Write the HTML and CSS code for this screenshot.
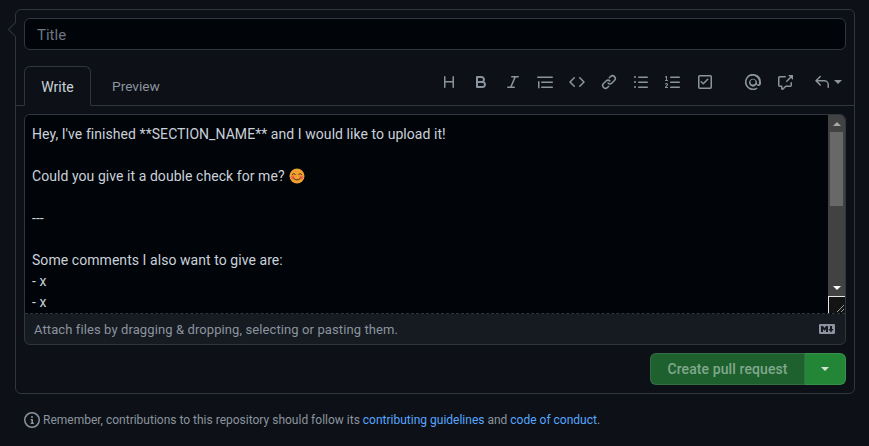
FILE: index.html
```html
<!DOCTYPE html>
<html>
<head>
    <title>Create pull request</title>
    <meta charset="utf-8">
    <link rel="stylesheet" href="styles.css">
</head>
<body>
    <div class="discussion-box">
        <div class="title-input">Title</div>

        <div class="tab-header">
            <div class="tab active">Write</div>
            <div class="tab">Preview</div>
            <div class="toolbar">
                <div class="tool-group">
                    <svg class="icon" viewBox="0 0 16 16"><path d="M3.75 2a.75.75 0 0 1 .75.75V7h7V2.75a.75.75 0 0 1 1.5 0v10.5a.75.75 0 0 1-1.5 0V8.5h-7v4.75a.75.75 0 0 1-1.5 0V2.75A.75.75 0 0 1 3.75 2Z"/></svg>
                    <svg class="icon" viewBox="0 0 16 16"><path d="M4 2h4.5a3.501 3.501 0 0 1 2.852 5.53A3.499 3.499 0 0 1 9.5 14H4a1 1 0 0 1-1-1V3a1 1 0 0 1 1-1Zm1 7v3h4.5a1.5 1.5 0 0 0 0-3Zm3.5-2a1.5 1.5 0 0 0 0-3H5v3Z"/></svg>
                    <svg class="icon" viewBox="0 0 16 16"><path d="M6 2.75A.75.75 0 0 1 6.75 2h6.5a.75.75 0 0 1 0 1.5h-2.505l-3.858 9H9.25a.75.75 0 0 1 0 1.5h-6.5a.75.75 0 0 1 0-1.5h2.505l3.858-9H6.75A.75.75 0 0 1 6 2.75Z"/></svg>
                    <svg class="icon" viewBox="0 0 16 16"><path d="M.75 2.5h14.5a.75.75 0 0 1 0 1.5H.75a.75.75 0 0 1 0-1.5Zm4 5h10.5a.75.75 0 0 1 0 1.5H4.75a.75.75 0 0 1 0-1.5Zm0 5h10.5a.75.75 0 0 1 0 1.5H4.75a.75.75 0 0 1 0-1.5ZM2.5 7.75v6a.75.75 0 0 1-1.5 0v-6a.75.75 0 0 1 1.5 0Z"/></svg>
                    <svg class="icon" viewBox="0 0 16 16"><path d="m11.28 3.22 4.25 4.25a.75.75 0 0 1 0 1.06l-4.25 4.25a.749.749 0 0 1-1.275-.326.749.749 0 0 1 .215-.734L13.94 8l-3.72-3.72a.749.749 0 0 1 .326-1.275.749.749 0 0 1 .734.215Zm-6.56 0a.751.751 0 0 1 1.042.018.751.751 0 0 1 .018 1.042L2.06 8l3.72 3.72a.749.749 0 0 1-.326 1.275.749.749 0 0 1-.734-.215L.47 8.53a.75.75 0 0 1 0-1.06Z"/></svg>
                    <svg class="icon" viewBox="0 0 16 16"><path d="m7.775 3.275 1.25-1.25a3.5 3.5 0 1 1 4.95 4.95l-2.5 2.5a3.5 3.5 0 0 1-4.95 0 .751.751 0 0 1 .018-1.042.751.751 0 0 1 1.042-.018 1.998 1.998 0 0 0 2.83 0l2.5-2.5a2.002 2.002 0 0 0-2.83-2.83l-1.25 1.25a.751.751 0 0 1-1.042-.018.751.751 0 0 1-.018-1.042Zm-4.69 9.64a1.998 1.998 0 0 0 2.83 0l1.25-1.25a.751.751 0 0 1 1.042.018.751.751 0 0 1 .018 1.042l-1.25 1.25a3.5 3.5 0 1 1-4.95-4.95l2.5-2.5a3.5 3.5 0 0 1 4.95 0 .751.751 0 0 1-.018 1.042.751.751 0 0 1-1.042.018 1.998 1.998 0 0 0-2.83 0l-2.5 2.5a1.998 1.998 0 0 0 0 2.83Z"/></svg>
                    <svg class="icon" viewBox="0 0 16 16"><path d="M5.75 2.5h8.5a.75.75 0 0 1 0 1.5h-8.5a.75.75 0 0 1 0-1.5Zm0 5h8.5a.75.75 0 0 1 0 1.5h-8.5a.75.75 0 0 1 0-1.5Zm0 5h8.5a.75.75 0 0 1 0 1.5h-8.5a.75.75 0 0 1 0-1.5ZM2 14a1 1 0 1 1 0-2 1 1 0 0 1 0 2Zm1-6a1 1 0 1 1-2 0 1 1 0 0 1 2 0ZM2 4a1 1 0 1 1 0-2 1 1 0 0 1 0 2Z"/></svg>
                    <svg class="icon" viewBox="0 0 16 16"><path d="M5 3.25a.75.75 0 0 1 .75-.75h8.5a.75.75 0 0 1 0 1.5h-8.5A.75.75 0 0 1 5 3.25Zm0 5a.75.75 0 0 1 .75-.75h8.5a.75.75 0 0 1 0 1.5h-8.5A.75.75 0 0 1 5 8.25Zm0 5a.75.75 0 0 1 .75-.75h8.5a.75.75 0 0 1 0 1.5h-8.5a.75.75 0 0 1-.75-.75ZM.924 10.32a.5.5 0 0 1-.851-.525l.001-.001.001-.002.002-.004.007-.011c.097-.144.215-.273.348-.384.228-.19.588-.392 1.068-.392.468 0 .858.181 1.126.484.259.294.377.673.377 1.038 0 .987-.686 1.495-1.156 1.845l-.047.035c-.303.225-.522.4-.654.597h1.357a.5.5 0 0 1 0 1H.5a.5.5 0 0 1-.5-.5c0-1.005.692-1.52 1.167-1.875l.035-.025c.531-.396.8-.625.8-1.078a.57.57 0 0 0-.128-.376C1.806 10.068 1.695 10 1.5 10a.658.658 0 0 0-.429.163.835.835 0 0 0-.144.153ZM2.003 2.5V6h.503a.5.5 0 0 1 0 1H.5a.5.5 0 0 1 0-1h.503V3.308l-.28.14a.5.5 0 0 1-.446-.895l1.003-.5a.5.5 0 0 1 .723.447Z"/></svg>
                    <svg class="icon" viewBox="0 0 16 16"><path d="M2.75 1h10.5c.966 0 1.75.784 1.75 1.75v10.5A1.75 1.75 0 0 1 13.25 15H2.75A1.75 1.75 0 0 1 1 13.25V2.75C1 1.784 1.784 1 2.75 1Zm10.5 1.5H2.75a.25.25 0 0 0-.25.25v10.5c0 .138.112.25.25.25h10.5a.25.25 0 0 0 .25-.25V2.75a.25.25 0 0 0-.25-.25Zm-1.97 3.28-4.5 4.5a.75.75 0 0 1-1.06 0l-2-2a.75.75 0 1 1 1.06-1.06l1.47 1.47 3.97-3.97a.75.75 0 1 1 1.06 1.06Z"/></svg>
                </div>
                <div class="tool-group">
                    <svg class="icon" viewBox="0 0 16 16"><path d="M4.75 2.37a6.501 6.501 0 0 0 6.5 11.26.75.75 0 0 1 .75 1.298A7.999 7.999 0 0 1 .989 4.148 7.999 7.999 0 0 1 16 8v1.5a2.5 2.5 0 0 1-4.593 1.367A4 4 0 1 1 12 8v1.5a1 1 0 0 0 2 0V8a6.5 6.5 0 0 0-9.25-5.63ZM10.5 8a2.5 2.5 0 1 0-5 0 2.5 2.5 0 0 0 5 0Z"/></svg>
                    <svg class="icon" viewBox="0 0 16 16"><path d="M2.75 3.5a.25.25 0 0 0-.25.25v7.5c0 .138.112.25.25.25h2a.75.75 0 0 1 .75.75v2.19l2.72-2.72a.749.749 0 0 1 .53-.22h4.5a.25.25 0 0 0 .25-.25v-2.5a.75.75 0 0 1 1.5 0v2.5A1.75 1.75 0 0 1 13.25 13H9.06l-2.573 2.573A1.458 1.458 0 0 1 4 14.543V13H2.75A1.75 1.75 0 0 1 1 11.25v-7.5C1 2.784 1.784 2 2.75 2h5.5a.75.75 0 0 1 0 1.5ZM16 1.25v4.146a.25.25 0 0 1-.427.177L14.03 4.03l-3.75 3.75a.749.749 0 0 1-1.275-.326.749.749 0 0 1 .215-.734l3.75-3.75-1.543-1.543A.25.25 0 0 1 11.604 1h4.146a.25.25 0 0 1 .25.25Z"/></svg>
                </div>
                <div class="reply-menu">
                    <svg class="icon" viewBox="0 0 16 16"><path d="M6.78 1.97a.75.75 0 0 1 0 1.06L3.81 6h6.44A4.75 4.75 0 0 1 15 10.75v2.5a.75.75 0 0 1-1.5 0v-2.5a3.25 3.25 0 0 0-3.25-3.25H3.81l2.97 2.97a.749.749 0 0 1-.326 1.275.749.749 0 0 1-.734-.215L1.47 7.28a.75.75 0 0 1 0-1.06l4.25-4.25a.75.75 0 0 1 1.06 0Z"/></svg>
                    <span class="caret"></span>
                </div>
            </div>
        </div>

        <div class="editor">
            <div class="write-area">
                <div class="write-text">
                    <div>Hey, I've finished **SECTION_NAME** and I would like to upload it!</div>
                    <div class="blank"></div>
                    <div>Could you give it a double check for me?
                        <svg class="emoji" viewBox="0 0 16 16">
                            <circle cx="8" cy="8" r="7.5" fill="#f0a030"/>
                            <circle cx="3.6" cy="9.4" r="1.9" fill="#ec6a4c"/>
                            <circle cx="12.4" cy="9.4" r="1.9" fill="#ec6a4c"/>
                            <path d="M3.4 6.6c.5-1.5 2.3-1.5 2.8 0M9.8 6.6c.5-1.5 2.3-1.5 2.8 0" fill="none" stroke="#5b3510" stroke-width="1" stroke-linecap="round"/>
                            <path d="M4.6 10c1 2.6 5.8 2.6 6.8 0" fill="none" stroke="#5b3510" stroke-width="1" stroke-linecap="round"/>
                        </svg>
                    </div>
                    <div class="blank"></div>
                    <div>---</div>
                    <div class="blank"></div>
                    <div>Some comments I also want to give are:</div>
                    <div>- x</div>
                    <div>- x</div>
                </div>
                <div class="scrollbar">
                    <div class="scroll-btn"><span class="arrow-up"></span></div>
                    <div class="scroll-track"><div class="scroll-thumb"></div></div>
                    <div class="scroll-btn"><span class="arrow-down"></span></div>
                    <div class="resizer">
                        <svg viewBox="0 0 16 16"><path d="M8 15 15 8M12 15l3-3" stroke="#9a9a9a" stroke-width="1" fill="none"/></svg>
                    </div>
                </div>
            </div>
            <div class="file-bar">
                <span>Attach files by dragging &amp; dropping, selecting or pasting them.</span>
                <svg class="icon md-icon" viewBox="0 0 16 16"><path d="M14.85 3c.63 0 1.15.52 1.14 1.15v7.7c0 .63-.51 1.15-1.15 1.15H1.15C.52 13 0 12.48 0 11.84V4.15C0 3.52.52 3 1.15 3ZM9 11V5H7L5.5 7 4 5H2v6h2V8l1.5 1.92L7 8v3Zm2.99.5L14.5 8H13V5h-2v3H9.5Z"/></svg>
            </div>
        </div>

        <div class="actions">
            <div class="btn-group">
                <div class="btn btn-main">Create pull request</div>
                <div class="btn btn-drop"><span class="caret caret-white"></span></div>
            </div>
        </div>
    </div>

    <p class="note">
        <svg class="icon note-icon" viewBox="0 0 16 16"><path d="M0 8a8 8 0 1 1 16 0A8 8 0 0 1 0 8Zm8-6.5a6.5 6.5 0 1 0 0 13 6.5 6.5 0 0 0 0-13ZM6.5 7.75A.75.75 0 0 1 7.25 7h1a.75.75 0 0 1 .75.75v2.75h.25a.75.75 0 0 1 0 1.5h-2a.75.75 0 0 1 0-1.5h.25v-2h-.25a.75.75 0 0 1-.75-.75ZM8 6a1 1 0 1 1 0-2 1 1 0 0 1 0 2Z"/></svg>
        <span>Remember, contributions to this repository should follow its <a href="#">contributing guidelines</a> and <a href="#">code of conduct</a>.</span>
    </p>
</body>
</html>
```

FILE: styles.css
```css
* {
    box-sizing: border-box;
}
body {
    margin: 0;
    padding: 9px 14px 0 15px;
    background-color: #0d1117;
    color: #c9d1d9;
    font-family: Roboto, Arial, sans-serif;
    font-size: 14px;
    overflow: hidden;
}
.icon {
    display: block;
    width: 16px;
    height: 16px;
    fill: #8b949e;
    flex: none;
}
.discussion-box {
    position: relative;
    height: 385px;
    padding: 8px;
    border: 1px solid #30363d;
    border-radius: 6px;
}
.discussion-box::before {
    content: "";
    position: absolute;
    left: -6px;
    top: 14px;
    width: 10px;
    height: 10px;
    background-color: #0d1117;
    border-left: 1px solid #30363d;
    border-bottom: 1px solid #30363d;
    transform: rotate(45deg);
}
.title-input {
    position: relative;
    height: 32px;
    padding: 0 12px;
    line-height: 32px;
    font-size: 15px;
    color: #6e7681;
    background-color: #010409;
    border: 1px solid #30363d;
    border-radius: 6px;
}
.tab-header {
    display: flex;
    align-items: flex-end;
    height: 56px;
    margin: 0 -8px;
    padding: 0 8px;
    border-bottom: 1px solid #30363d;
}
.tab {
    height: 40px;
    padding: 0 20px;
    line-height: 41px;
    font-size: 13.7px;
    color: #8b949e;
    border: 1px solid transparent;
}
.tab.active {
    width: 67px;
    padding: 0;
    margin-bottom: -1px;
    text-align: center;
    font-size: 14px;
    color: #c9d1d9;
    background-color: #0d1117;
    border-color: #30363d;
    border-bottom-color: #0d1117;
    border-radius: 6px 6px 0 0;
}
.toolbar {
    display: flex;
    align-items: center;
    align-self: flex-end;
    height: 40px;
    margin-left: auto;
    padding: 0 4px 7px 0;
}
.tool-group {
    display: flex;
    gap: 16px;
    margin-right: 32px;
}
.tool-group + .tool-group {
    margin-right: 21px;
}
.reply-menu {
    display: flex;
    align-items: center;
    gap: 4px;
}
.caret {
    display: block;
    width: 0;
    height: 0;
    border-style: solid;
    border-width: 4px 4px 0;
    border-color: #8b949e transparent transparent;
}
.caret-white {
    border-top-color: #d5e3d9;
}
.editor {
    margin-top: 8px;
    border: 1px solid #30363d;
    border-radius: 6px;
    background-color: #161b22;
    overflow: hidden;
}
.write-area {
    display: flex;
    height: 199px;
    background-color: #010409;
    border-bottom: 1px dashed #30363d;
}
.write-text {
    flex: 1;
    padding: 9px 7px;
    line-height: 21px;
    letter-spacing: 0.06px;
    overflow: hidden;
}
.blank {
    height: 21px;
}
.emoji {
    display: inline-block;
    width: 16px;
    height: 16px;
    margin-left: 1px;
    vertical-align: -3px;
}
.scrollbar {
    display: flex;
    flex-direction: column;
    width: 17px;
    background-color: #424242;
}
.scroll-btn {
    display: flex;
    align-items: center;
    justify-content: center;
    height: 17px;
}
.arrow-up, .arrow-down {
    width: 0;
    height: 0;
    border-style: solid;
}
.arrow-up {
    border-width: 0 4px 4px;
    border-color: transparent transparent #a8a8a8;
}
.arrow-down {
    border-width: 4px 4px 0;
    border-color: #fff transparent transparent;
}
.scroll-track {
    flex: 1;
    padding: 0 2px;
}
.scroll-thumb {
    height: 74px;
    background-color: #686868;
}
.resizer {
    height: 17px;
    background-color: #141414;
    border-top: 1px solid #e6e6e6;
    border-left: 1px solid #e6e6e6;
}
.resizer svg {
    display: block;
    width: 16px;
    height: 16px;
}
.file-bar {
    display: flex;
    align-items: center;
    justify-content: space-between;
    height: 30px;
    padding: 0 10px 0 9px;
    font-size: 13px;
    letter-spacing: 0.1px;
    color: #8b949e;
}
.actions {
    display: flex;
    justify-content: flex-end;
    margin-top: 8px;
}
.btn-group {
    display: flex;
    height: 32px;
    font-size: 14px;
    font-weight: 500;
    letter-spacing: 0.1px;
}
.btn {
    display: flex;
    align-items: center;
    justify-content: center;
    border: 1px solid rgba(240, 246, 252, 0.1);
}
.btn-main {
    width: 155px;
    color: #7fa98c;
    background-color: #1f602f;
    border-radius: 6px 0 0 6px;
}
.btn-drop {
    width: 41px;
    background-color: #238636;
    border-left: none;
    border-radius: 0 6px 6px 0;
}
.note {
    display: flex;
    align-items: center;
    gap: 3px;
    margin: 18px 0 0 9px;
    font-size: 12px;
    color: #8b949e;
}
.note a {
    color: #58a6ff;
    text-decoration: none;
}
```
